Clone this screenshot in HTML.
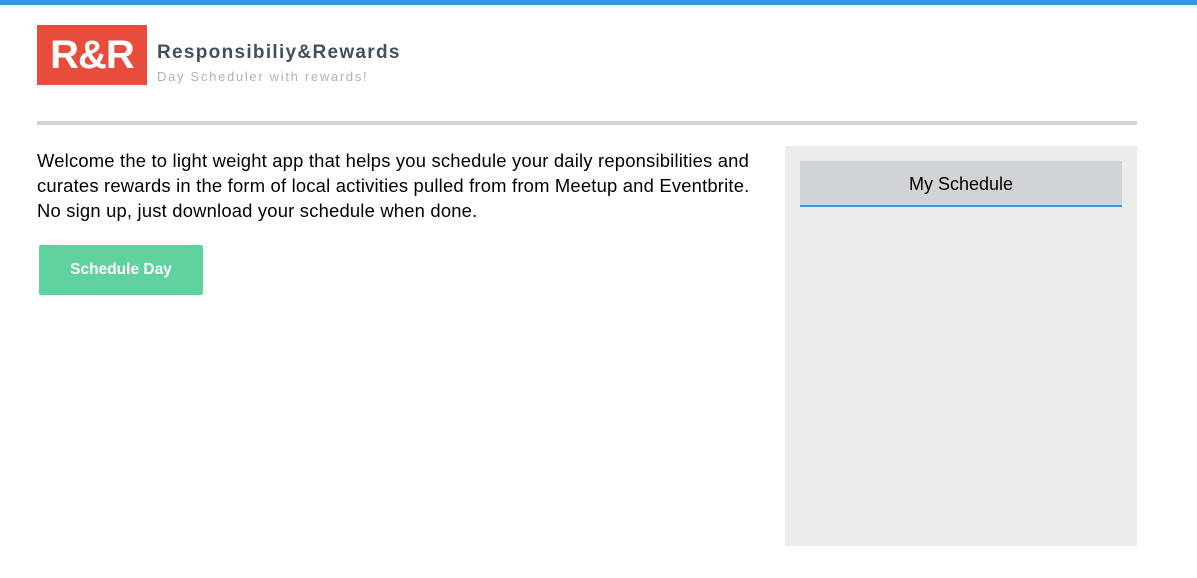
<!DOCTYPE html>
<html><head><style>
body{margin:0;width:1197px;height:578px;background:#fff;position:relative;overflow:hidden;font-family:"Liberation Sans",sans-serif}
.top{position:absolute;left:0;top:0;width:1197px;height:5px;background:#3498db}
.logo{position:absolute;left:37px;top:25px;width:110px;height:60px;background:#e74c3c;color:#fff;font-weight:bold;font-size:40px;line-height:60px;text-align:center;letter-spacing:-1px}
.t1{position:absolute;left:157px;top:42px;font-size:19px;color:#2c3e50;font-weight:bold;letter-spacing:1.3px;opacity:.9}
.t2{position:absolute;left:157px;top:69px;font-size:13px;color:#a9b3b8;letter-spacing:1.7px}
.hr{position:absolute;left:37px;top:121px;width:1100px;height:4px;background:#d1d4d7}
.p{position:absolute;left:37px;top:148px;width:760px;font-size:18.4px;line-height:25px;color:#000;white-space:nowrap;letter-spacing:0.2px}
.btn{position:absolute;left:39px;top:245px;width:164px;height:50px;background:#5fd2a0;color:#fff;font-size:15.5px;font-weight:bold;line-height:50px;text-align:center;border-radius:2px}
.panel{position:absolute;left:785px;top:146px;width:352px;height:400px;background:#ececec}
.hd{position:absolute;left:15px;top:15px;width:322px;height:44px;background:#d1d4d7;border-bottom:2px solid #3498db;text-align:center;line-height:46px;font-size:18px;color:#000}
</style></head><body>
<div class="top"></div>
<div class="logo">R&amp;R</div>
<div class="t1">Responsibiliy&amp;Rewards</div>
<div class="t2">Day Scheduler with rewards!</div>
<div class="hr"></div>
<div class="p">Welcome the to light weight app that helps you schedule your daily reponsibilities and<br>curates rewards in the form of local activities pulled from from Meetup and Eventbrite.<br>No sign up, just download your schedule when done.</div>
<div class="btn">Schedule Day</div>
<div class="panel"><div class="hd">My Schedule</div></div>
</body></html>
